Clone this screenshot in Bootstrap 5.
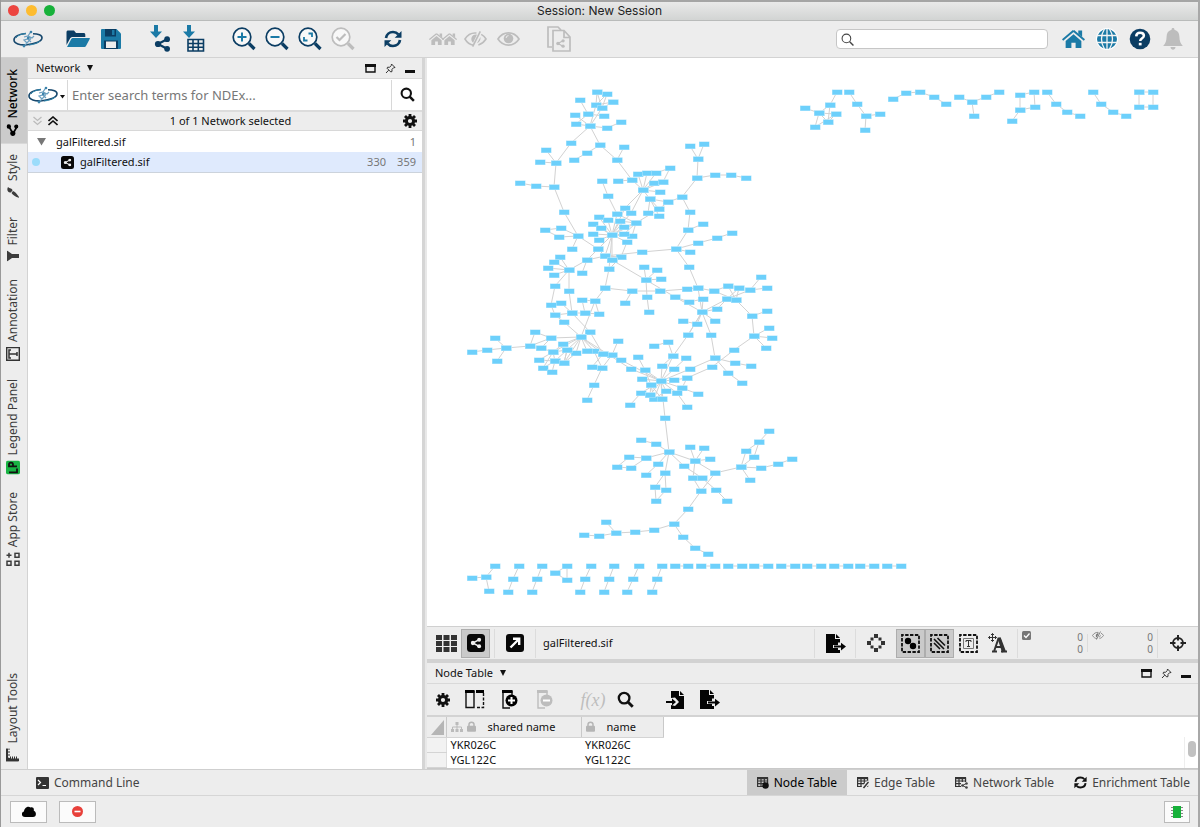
<!DOCTYPE html>
<html lang="en">
<head>
<meta charset="utf-8">
<meta name="viewport" content="width=device-width, initial-scale=1">
<title>Session: New Session</title>
<link href="https://cdn.jsdelivr.net/npm/bootstrap@5.3.0/dist/css/bootstrap.min.css" rel="stylesheet">
<style>
:root{--chrome:#ededed;--line:#d3d3d3;--navy:#0b3d63;--teal:#1b7aa6;--mute:#bdbdbd}
body{font-family:"Noto Sans","Open Sans",sans-serif;font-size:11px;line-height:16px;color:#111;background:var(--chrome)}
svg{display:block;flex:none}
button{font-family:inherit;color:inherit;background:none;border:0;padding:0}
.app-window{border-left:1px solid #999;border-right:2px solid #a8a8a8;min-height:100vh}
.title-bar{height:21px;background:linear-gradient(#e9e9e9,#d2d4d3);border-top:2px solid #a5a5a5;border-bottom:1px solid #b9bbba;font:12px/18px Inter,sans-serif;color:#222}
.title-bar .lights{left:7px;top:3px;gap:7px}
.lights button{width:11px;height:11px;border-radius:50%}
.light-close{background:#ec4540}
.light-min{background:#fdbc2f}
.light-zoom{background:#17b13a}
.tool-bar{height:37px;border-bottom:1px solid var(--line);padding:0 9px 0 10px;gap:17px;color:var(--navy)}
.tool-btn{width:33px;height:34px;display:flex;align-items:center;justify-content:center}
.muted{color:var(--mute)}
.quick-find{width:212px;height:20px;background:#fff;border:1px solid #c6c6c6;border-radius:4px;margin-right:-8px}
.quick-find input,.ndex input{border:0;outline:0;background:none;min-width:0}
.side-strip{width:27px;border-right:1px solid var(--line)}
.side-tab{writing-mode:vertical-rl;transform:rotate(180deg);font-size:12px;line-height:20px;color:#3c3c3c;display:flex;align-items:center;gap:5px;padding:8px 2px 10px 4px;width:26px}
.side-tab.on{background:#cbcbcb;color:#000;font-weight:500;padding-bottom:11px}
.side-tab svg{transform:rotate(180deg)}
.side-tab svg.turn{transform:rotate(90deg)}
.net-panel{width:394px}
.panel-head{height:21px;border-bottom:1px solid #d9d9d9;padding:0 7px 0 8px;background:var(--chrome)}
.head-menu{display:flex;align-items:center;gap:7px}
.ndex{height:33px;border-bottom:2px solid #dcdcdc;font-size:13px}
.ndex input{color:#666;border-left:1px solid #d8d8d8;border-right:1px solid #d8d8d8;padding:0 4px;height:30px}
.ndex input::placeholder{color:#777;opacity:1}
.count-bar{height:19px;border-bottom:1px solid #d8d8d8;background:var(--chrome);padding:0 5px;gap:6px}
.tree-row{height:21px;padding:0 6px 0 4px}
.tree-row .num{color:#777;width:30px;text-align:right}
.tree-row.on{background:#dfeafd;border-bottom:1px solid #ccd3dc}
.split-v{width:5px;background:#d5d5d5;border-right:2px solid #e8e8e8}
.split-h{height:4px;background:#d2d2d2}
.view-bar{height:33px;border-top:1px solid #d0d0d0}
.view-bar .tile{width:29px;height:29px;display:flex;align-items:center;justify-content:center}
.view-bar .wide{width:40px}
.tile.on{background:#cacaca;border:1px solid #adadad}
.rule{width:1px;height:29px;background:#dcdcdc}
.rule.short{height:18px}
.counts{color:#777;font-size:10px;line-height:12px;width:69px;padding:0 4px}
.table-tools{height:33px;border-bottom:2px solid #d3d3d3}
.table-tools button{width:32px;height:30px;display:flex;align-items:center;justify-content:center}
.table-tools .gap-before{margin-left:16px}
.fx{font:italic 18px/20px "Liberation Serif",serif}
.grid-wrap{height:52px;border-bottom:1px solid #c9c9c9;overflow:hidden}
.data-grid{border-collapse:collapse;table-layout:fixed;width:236px}
.data-grid th{height:20px;font-weight:400;background:var(--chrome);border-right:1px solid #c9c9c9;border-bottom:1px solid #d4d4d4;padding:0 4px 0 7px}
.data-grid th span{margin-left:12px}
.data-grid td{height:15px;line-height:14px;padding:0 5px 1px 4px}
.data-grid tbody th{height:15px;background:#f2f2f2;border-right-color:#ddd}
.scroll-lane{width:14px;margin-top:20px;border-left:1px solid #eee}
.scroll-lane div{width:8px;height:16px;border-radius:4px;background:#c1c1c1}
.dock{height:27px;border-top:1px solid #cfcfcf;border-bottom:1px solid #d6d6d6;font-size:12px;color:#444}
.dock button{display:flex;align-items:center;gap:5px;padding:0 10px;height:25px}
.dock button:last-child{padding-right:8px}
.dock .on{background:#cbcbcb;color:#000}
.status{height:31px;padding:0 8px 0 9px;gap:12px}
.status button{height:22px;width:37px;background:#fbfbfb;border:1px solid #bbb;display:flex;align-items:center;justify-content:center}
.status .mem{width:26px}
</style>
</head>
<body>
<svg width="0" height="0" class="position-absolute" aria-hidden="true">
<defs>
<symbol id="i-logo" viewBox="0 0 30 18"><g fill="none"><path d="M13 3.500C6 4 1 6.500 1 10c0 3.500 6 5.500 13 4.700 7-.7 14.500-3 15-6.700.2-2.700-4-4.300-9-4.300" stroke="#17486d" stroke-width="1.600"/><path d="M3 8c2-3 6-4.300 10-4.500M27 11c-2 2-6 3.500-11 4" stroke="#2f86ad" stroke-width="1"/><path d="M18 1.500 15 6l2.500 3L14 13l-3 3M11 7l4-1 4 2 2-2M14 13l-3-3 4-1 3 3" stroke="#6b9fc0" stroke-width="1.200"/></g><g fill="#3b83ab"><circle cx="18" cy="2" r="1.300"/><circle cx="11" cy="16" r="1.400"/><circle cx="15" cy="8" r="1.200"/></g></symbol>
<symbol id="i-folder" viewBox="0 0 24 20"><path d="M.5 16V3.500C.5 2 1 1.500 2.500 1.500H8l2 2.500h7.500c1.200 0 1.800.5 1.800 1.700V8H7C5.500 8 4.500 8.500 3.800 10z" fill="#0b3d63"/><path d="M1 18 5 10.500c.5-1 1-1.500 2.300-1.500H23c.9 0 1 .5.7 1l-3.700 7c-.5.8-1 1-2 1z" fill="#1b7aa6"/></symbol>
<symbol id="i-save" viewBox="0 0 22 22"><path d="M2 1h14.500L21 5.500V20a1 1 0 0 1-1 1H2a1 1 0 0 1-1-1V2a1 1 0 0 1 1-1z" fill="#1b7aa6"/><path d="M5 1h11v7.500H5zM4 12.500h14V21H4z" fill="#0b3d63"/><path d="M6 13.500h10V20H6z" fill="#ededed"/><path d="M12 2h2.500v5H12z" fill="#1b7aa6"/></symbol>
<symbol id="i-share" viewBox="0 0 16 16"><path d="M12.500 3.200 3.500 8l9 4.800" fill="none" stroke="currentColor" stroke-width="2.200"/><circle cx="3.500" cy="8" r="3.100" fill="currentColor"/><circle cx="12.600" cy="3.200" r="2.900" fill="currentColor"/><circle cx="12.600" cy="12.800" r="2.900" fill="currentColor"/></symbol>
<symbol id="i-down" viewBox="0 0 12 13"><path d="M4 0h4v6.500h4L6 13 0 6.500h4z" fill="#1b7aa6"/></symbol>
<symbol id="i-imp-net" viewBox="0 0 22 28"><use href="#i-down" x="0" y="0" width="12" height="13"/><use href="#i-share" x="4" y="11" width="17" height="16"/></symbol>
<symbol id="i-imp-tab" viewBox="0 0 22 28"><use href="#i-down" x="0" y="0" width="12" height="13"/><path d="M5 14.500h15.500v11.500H5zM10 15v11M15.300 15v11M5 18.500h15.500M5 22.200h15.500" fill="none" stroke="#0b3d63" stroke-width="1.600"/></symbol>
<symbol id="i-lens" viewBox="0 0 24 24"><circle cx="10" cy="10" r="8.800" fill="#f8f8f8" stroke="currentColor" stroke-width="1.700"/><path d="m17 16.500 5.500 5.500" stroke="currentColor" stroke-width="3.200"/></symbol>
<symbol id="i-refresh" viewBox="0 0 18 18"><path d="M2 8C2.500 4.500 5.300 2 9 2c2.300 0 4 .8 5.300 2.400M16 10c-.5 3.500-3.300 6-7 6-2.300 0-4-.8-5.300-2.400" fill="none" stroke="currentColor" stroke-width="2.700"/><path d="M17.500 1v6.800h-6.800zM.5 17v-6.800h6.800z" fill="currentColor"/></symbol>
<symbol id="i-home" viewBox="0 0 24 20"><path d="M12 1.500.6 11M12 1.500 23.400 11" fill="none" stroke="currentColor" stroke-width="2"/><path d="M17 1h4v7l-4-3.500zM12 5l8.200 7v7.500h-6V14H9.800v5.500h-6V12z" fill="currentColor"/></symbol>
<symbol id="i-eye" viewBox="0 0 24 16"><path d="M1 8c5.500-8.500 16.500-8.500 22 0-5.500 8.500-16.500 8.500-22 0z" fill="none" stroke="currentColor" stroke-width="1.700"/><circle cx="12" cy="7.500" r="5" fill="currentColor"/><path d="M9.500 7A2.500 2.500 0 0 1 12 4.500" fill="none" stroke="#ededed"/></symbol>
<symbol id="i-eyeoff" viewBox="0 0 24 18"><path d="M10 15.500C6 14.800 3 12.500 1 9c2.800-4.500 7-6.800 12-6.200M18 4.200c2 1.100 3.700 2.800 5 4.800-2 3-4.700 5.200-8 6.200" fill="none" stroke="currentColor" stroke-width="1.600"/><path d="M17 1 9 17" stroke="currentColor" stroke-width="1.700"/><path d="M13.500 4.500 9.500 13C5.500 9.500 8.500 3.500 13.500 4.500zM17.200 7c.5 2.800-.9 5.500-3.700 6.500z" fill="currentColor"/></symbol>
<symbol id="i-docs" viewBox="0 0 24 26"><path d="M5 21H1V1h10l3 3M14 4.500H6V25h17V11l-6-6.500h-3M17 5v6.500h6" fill="none" stroke="currentColor" stroke-width="1.700"/><use href="#i-share" x="9" y="13" width="9" height="9"/></symbol>
<symbol id="i-globe" viewBox="0 0 22 22"><circle cx="11" cy="11" r="11" fill="#fff"/><circle cx="11" cy="11" r="10" fill="#1b7aa6"/><path d="M11 1v20M1 7.500h20M1 14.500h20M8.500 1C4.500 7 4.500 15 8.500 21M13.500 1c4 6 4 14 0 20" fill="none" stroke="#f4f4f4" stroke-width="1.300"/></symbol>
<symbol id="i-help" viewBox="0 0 22 22"><circle cx="11" cy="11" r="10.300" fill="#0b3d63"/><path d="M7.200 8.300c.2-2.500 1.700-3.500 3.900-3.500 2.300 0 3.800 1.200 3.800 3 0 2.500-3.700 2.500-3.700 5.200" fill="none" stroke="#fff" stroke-width="2.500"/><path d="M9.800 14.800h2.800v2.600H9.800z" fill="#fff"/></symbol>
<symbol id="i-bell" viewBox="0 0 20 22"><path d="M10 0c1 0 1.500.7 1.400 1.700 3.200.8 4.900 3.200 5 6.800.1 4.500 1 6.700 3.400 9.500H.2c2.400-2.800 3.300-5 3.400-9.500.1-3.600 1.800-6 5-6.800C8.500.7 9 0 10 0zM7.500 19h5c-.2 3.500-4.800 3.500-5 0z" fill="currentColor"/></symbol>
<symbol id="i-find" viewBox="0 0 16 16"><circle cx="6.700" cy="6.700" r="5" fill="none" stroke="currentColor" stroke-width="2.200"/><path d="m10.300 10.300 4.500 4.500" stroke="currentColor" stroke-width="2.700"/></symbol>
<symbol id="i-thin" viewBox="0 0 12 12"><circle cx="5" cy="5" r="4" fill="none" stroke="#444"/><path d="m8 8 3.500 3.500" stroke="#444" stroke-width="1.300"/></symbol>
<symbol id="i-gear" viewBox="0 0 14 14"><circle cx="7" cy="7" r="3.600" fill="none" stroke="currentColor" stroke-width="3"/><path d="M7 0v3M7 11v3M0 7h3M11 7h3M2 2l2.200 2.200M9.800 9.800 12 12M12 2 9.800 4.200M4.200 9.800 2 12" stroke="currentColor" stroke-width="2.800"/></symbol>
<symbol id="i-caret" viewBox="0 0 6 6"><path d="M0 0h6L3 6z" fill="#111"/></symbol>
<symbol id="i-max" viewBox="0 0 11 9"><path d="M1 1h9v7H1z" fill="none" stroke="#111" stroke-width="1.400"/><path d="M0 0h11v3H0z" fill="#111"/></symbol>
<symbol id="i-pin" viewBox="0 0 11 11"><path d="m6.500 1 3.500 3.500-1.500.3-1.500 1.500V8.500L5.800 9 2 5.200l.6-1 2 .1L6.200 2.600zM3.700 7.200 1 10" fill="none" stroke="#333"/></symbol>
<symbol id="i-min" viewBox="0 0 10 11"><path d="M0 7h10v3H0z" fill="#111"/></symbol>
<symbol id="i-sharebox" viewBox="0 0 18 18"><rect width="18" height="18" rx="3.500" fill="#080808"/><use href="#i-share" x="3.500" y="3.500" width="11" height="11" color="#eee"/></symbol>
<symbol id="i-net3" viewBox="0 0 13 12"><path d="m9.500 2.500-7 4 7 4" stroke="currentColor" stroke-width="1.800" fill="none"/><circle cx="9.600" cy="2.300" r="2.200" fill="currentColor"/><circle cx="2.700" cy="6.300" r="2.600" fill="currentColor"/><circle cx="9.600" cy="9.800" r="2.100" fill="currentColor"/></symbol>
<symbol id="i-export" viewBox="0 0 21 19"><path d="M1 0h9v5h5v3.500h-2V11H8v3h5v2h2v3H1zM11 0l4 4h-4z" fill="#050505"/><path d="M9 11.600h7V8.700l5 3.900-5 3.900v-2.900H9z" fill="#050505"/></symbol>
<symbol id="i-import" viewBox="0 0 18 18"><path d="M5 0h8v5h5v13H5v-4l4 1 4-4-4-4.500L5 7zM14 0l4 4h-4z" fill="#050505"/><path d="M0 10h6V7.500L10 11l-4 3.500V12H0z" fill="#050505"/></symbol>
<symbol id="i-lock" viewBox="0 0 9 11"><path d="M2 5V3.500C2 .5 7 .5 7 3.500V5" fill="none" stroke="#b5b5b5" stroke-width="1.500"/><rect y="4.700" width="9" height="6" rx="1" fill="#b5b5b5"/></symbol>
<symbol id="i-frame" viewBox="0 0 19 19"><path d="M1 1h17v17H1z" fill="none" stroke="#111" stroke-width="1.800" stroke-dasharray="3.400 1.460" stroke-dashoffset="1.700"/></symbol>
<symbol id="i-sheet" viewBox="0 0 13 12"><path d="M.6 1h10v8.500H.6zM.6 4h10M.6 6.700h10M4 1v8.500M7.300 1v8.500" fill="none" stroke="#333" stroke-width="1.200"/><path d="M0 0h11v2.200H0z" fill="#333"/></symbol>
<marker id="node" viewBox="-6 -4 12 8" refX="0" refY="0" markerWidth="12" markerHeight="8" markerUnits="userSpaceOnUse"><rect x="-5" y="-2.500" width="10.500" height="5.500" fill="#b4e6fc"/><rect x="-4.500" y="-2" width="9.500" height="4.500" fill="#6dd0fb"/></marker>
</defs>
</svg>

<div class="app-window d-flex flex-column">
  <header class="title-bar position-relative text-center">
    <div class="lights position-absolute d-flex">
      <button class="light-close" aria-label="Close"></button><button class="light-min" aria-label="Minimize"></button><button class="light-zoom" aria-label="Zoom"></button>
    </div>
    Session: New Session
  </header>

  <div class="tool-bar d-flex align-items-center" role="toolbar">
    <button class="tool-btn" aria-label="Cytoscape"><svg width="30" height="18"><use href="#i-logo"/></svg></button>
    <div class="d-flex">
      <button class="tool-btn" aria-label="Open"><svg width="24" height="20"><use href="#i-folder"/></svg></button>
      <button class="tool-btn" aria-label="Save"><svg width="22" height="22"><use href="#i-save"/></svg></button>
    </div>
    <div class="d-flex">
      <button class="tool-btn" aria-label="Import network"><svg width="22" height="28"><use href="#i-imp-net"/></svg></button>
      <button class="tool-btn" aria-label="Import table"><svg width="22" height="28"><use href="#i-imp-tab"/></svg></button>
    </div>
    <div class="d-flex">
      <button class="tool-btn" aria-label="Zoom in"><svg width="24" height="24"><use href="#i-lens"/><path d="M5.500 10h9M10 5.500v9" stroke="#1b7aa6" stroke-width="2"/></svg></button>
      <button class="tool-btn" aria-label="Zoom out"><svg width="24" height="24"><use href="#i-lens"/><path d="M5.500 10h9" stroke="#1b7aa6" stroke-width="2"/></svg></button>
      <button class="tool-btn" aria-label="Fit content"><svg width="24" height="24"><use href="#i-lens"/><path d="M10.500 6.500H14V10M6 10v3.500h3.500" fill="none" stroke="#1b7aa6" stroke-width="1.800"/></svg></button>
      <button class="tool-btn muted" aria-label="Fit selected" disabled><svg width="24" height="24"><use href="#i-lens"/><path d="m5.500 10 3 3 6-6" fill="none" stroke="#bdbdbd" stroke-width="2.200"/></svg></button>
    </div>
    <button class="tool-btn" aria-label="Refresh"><svg width="18" height="18"><use href="#i-refresh"/></svg></button>
    <div class="d-flex muted">
      <button class="tool-btn" aria-label="First neighbors" disabled><svg width="28" height="14"><use href="#i-home" width="15" height="14"/><use href="#i-home" x="13" width="15" height="14"/></svg></button>
      <button class="tool-btn" aria-label="Hide" disabled><svg width="23" height="18"><use href="#i-eyeoff"/></svg></button>
      <button class="tool-btn" aria-label="Show" disabled><svg width="23" height="16"><use href="#i-eye"/></svg></button>
    </div>
    <button class="tool-btn muted" aria-label="New network from selection" disabled><svg width="24" height="26"><use href="#i-docs"/></svg></button>
    <label class="quick-find d-flex align-items-center ms-auto px-1 gap-1"><svg width="13" height="13"><use href="#i-thin"/></svg><input type="text" class="flex-fill" aria-label="Search"></label>
    <div class="d-flex">
      <button class="tool-btn" aria-label="Home" style="color:var(--teal)"><svg width="23" height="20"><use href="#i-home"/></svg></button>
      <button class="tool-btn" aria-label="Web"><svg width="22" height="22"><use href="#i-globe"/></svg></button>
      <button class="tool-btn" aria-label="Help"><svg width="22" height="22"><use href="#i-help"/></svg></button>
      <button class="tool-btn muted" aria-label="Notifications"><svg width="20" height="22"><use href="#i-bell"/></svg></button>
    </div>
  </div>

  <div class="d-flex flex-fill">
    <nav class="side-strip d-flex flex-column" aria-label="Panels">
      <button class="side-tab on"><svg class="turn" width="13" height="12"><use href="#i-net3"/></svg>Network</button>
      <button class="side-tab"><svg width="12" height="13" viewBox="0 0 12 13"><path d="M11.500 0C8 2 5 4.500 4.500 6.500L6.500 8C8.500 6.500 10.500 4 11.500 0zM4 7C1.500 7 2.500 10 .5 11.500 3 13 6.500 12 6 8.700z" fill="#3c3c3c" transform="rotate(90 6 6.500)"/></svg>Style</button>
      <button class="side-tab"><svg width="12" height="11" viewBox="0 0 12 11"><path d="M0 0v11l5-3.500h7v-4H5z" fill="#3c3c3c"/></svg>Filter</button>
      <button class="side-tab"><svg width="14" height="14" viewBox="0 0 14 14"><path d="M.7.7h12.600v12.600H.7z" fill="none" stroke="#333" stroke-width="1.400"/><path d="M5 3H3v8h2M3 7h8M11 5v4" fill="none" stroke="#333" stroke-width="1.500"/></svg>Annotation</button>
      <button class="side-tab"><svg width="14" height="14" viewBox="0 0 14 14"><rect width="14" height="14" rx="2" fill="#19b444"/><path d="M3 12h8V8M11 6H3V4c0-2.500 4-2.500 4 0v2" fill="none" stroke="#111" stroke-width="1.800"/></svg>Legend Panel</button>
      <button class="side-tab"><svg width="14" height="14" viewBox="0 0 14 14"><path d="M1 9h4v4H1zM9 9h4v4H9zM9 1h4v4H9zM3 .5v5M.5 3h5" fill="none" stroke="#3c3c3c" stroke-width="1.500"/></svg>App Store</button>
      <button class="side-tab mt-auto"><svg width="13" height="13" viewBox="0 0 13 13"><path d="M0 0h2v10l2 1V8h1v3h1V8h1v3h1V8h1v3h1V8h1v3h1v2H0z" fill="#333"/><path d="M0 13V0h4v1H2v2h2v1H2v2h2v1H2v2l3 1h8v3z" fill="#333"/></svg>Layout Tools</button>
    </nav>

    <section class="net-panel bg-white flex-shrink-0">
      <div class="panel-head d-flex align-items-center">
        <button class="head-menu">Network<svg width="6" height="6"><use href="#i-caret"/></svg></button>
        <div class="d-flex ms-auto align-items-center" style="gap:9px">
          <button aria-label="Float"><svg width="11" height="9"><use href="#i-max"/></svg></button><button aria-label="Unpin"><svg width="11" height="11"><use href="#i-pin"/></svg></button><button aria-label="Minimize panel"><svg width="10" height="11"><use href="#i-min"/></svg></button>
        </div>
      </div>
      <div class="ndex d-flex align-items-center">
        <button class="d-flex align-items-center" aria-label="NDEx" style="width:39px"><svg width="30" height="18"><use href="#i-logo"/></svg><svg width="5" height="4" class="mt-1" style="margin-left:2px"><path d="M0 0h5L2.500 3.500z" fill="#111"/></svg></button>
        <input type="text" class="flex-fill" placeholder="Enter search terms for NDEx..." aria-label="Search NDEx">
        <button class="d-flex justify-content-center" aria-label="Search" style="width:30px"><svg width="15" height="15"><use href="#i-find"/></svg></button>
      </div>
      <div class="count-bar d-flex align-items-center">
        <button aria-label="Expand all"><svg width="9" height="10"><path d="m.5 1 4 3.500 4-3.500M.5 5l4 3.500 4-3.500" fill="none" stroke="#bbb" stroke-width="1.300"/></svg></button>
        <button aria-label="Collapse all"><svg width="10" height="10"><path d="m.5 5 4.500-4 4.500 4M.5 9 5 5l4.500 4" fill="none" stroke="#111" stroke-width="1.600"/></svg></button>
        <span class="flex-fill text-center">1 of 1 Network selected</span>
        <button aria-label="Options"><svg width="14" height="14"><use href="#i-gear"/></svg></button>
      </div>
      <div class="tree-row d-flex align-items-center"><svg width="20" height="8"><path d="M5 0h9l-4.500 7.500z" fill="#777"/></svg><span class="ms-1">galFiltered.sif</span><span class="num ms-auto">1</span></div>
      <div class="tree-row on d-flex align-items-center"><svg width="8" height="8"><circle cx="4" cy="4" r="4" fill="#9bdcfb"/></svg><svg width="13" height="13" style="margin:0 6px 0 21px"><use href="#i-sharebox"/></svg>galFiltered.sif<span class="num ms-auto">330</span><span class="num">359</span></div>
    </section>
    <div class="split-v flex-shrink-0"></div>

    <main class="d-flex flex-column flex-fill" style="min-width:0">
      <div class="bg-white flex-fill d-flex">
        <svg class="w-100 h-100" viewBox="427 58 771 568" role="img" aria-label="galFiltered.sif network">
          <defs><path id="net" d="M597 92L596 105 607 94 602 108 597 92M613 102L596 105 590 126 602 108 613 102M580 100L588 114 604 116M575 115L590 126 576 124 588 114M590 126L607 128 621 122M590 126L571 143 556 163 554 187 564 212 578 236 598 249 605 256 612 235M590 126L600 145 617 160 632 180 643 190M546 150L556 163 540 162M520 183L536 186 554 187M600 145L587 153 574 160M617 160L624 147M618 181L632 180M602 181L608 196 617 214 612 235M617 214L636 223
M643 190L638 174M643 190L647 173M643 190L656 173 670 168 663 182 643 190 654 183 663 182M643 190L660 192M643 190L650 199M643 190L625 208 612 235M643 190L631 213 612 235
M650 199L668 202 682 197M650 199L659 209M650 199L648 213M650 199L659 216M668 202L659 209 636 223
M612 235L599 217M612 235L608 220M612 235L593 224M612 235L601 228M612 235L593 234M612 235L599 240M612 235L620 221 636 223 612 235M612 235L624 227 636 223 632 236 612 235 624 234 636 223M612 235L627 242 621 257 605 256M612 235L598 249M612 235L612 260 621 257 609 269 612 235M605 256L612 260M605 256L642 252 676 249M569 270L587 260 605 256M598 249L587 260 582 273M612 260L646 280
M578 236L561 228 545 230 559 237 578 236 572 249M569 270L560 257M569 270L554 262M569 270L548 268M569 270L554 275M569 270L569 291 572 313M569 270L555 286 551 305 555 315 564 322 581 337M561 303L572 313 555 315M572 313L585 313 582 300 595 301 599 314 585 313M609 269L605 288 595 301 581 337M605 288L632 291 660 291M632 291L625 303
M572 313L590 332 603 354M590 332L581 337 551 338 535 332 530 346 551 338 541 348 530 346 506 348 495 338M506 348L497 361M506 348L487 350 472 352M541 348L553 352 581 337 563 344 553 352 555 361 539 360 553 352 543 368 555 361 552 372M555 361L564 363 567 350 555 361M581 337L567 350 564 363 576 353 581 337M553 352L567 350M581 337L564 363M581 337L587 351M581 337L594 351 602 368 594 385 587 400M581 337L603 354 612 355 618 341M612 355L602 368 592 367 603 354M612 355L621 360 661 381M581 337L631 369 661 381M587 351L603 354
M638 357L645 370 651 385M661 381L642 379M661 381L651 385 650 395 661 381M661 381L641 393 630 405M650 395L654 399 661 381 662 399 651 385 654 399 666 391 661 381M650 395L662 399M661 381L677 393 687 407M661 381L682 388 698 394M661 381L674 380 687 378 682 388M687 378L712 367 734 350 754 336M661 381L690 369 715 358M661 381L674 369 686 358M661 381L662 366 673 356 661 381M673 356L668 342 654 346M673 356L688 335 702 312M661 381L645 370M661 381L665 418 669 452
M646 280L644 267M646 280L657 270M646 280L661 279M646 280L647 297 649 312M646 280L675 297 702 312M660 291L687 289 698 288 714 291 736 300M698 288L702 312M675 297L689 302 703 299 702 312M702 312L727 299 739 288 728 286 736 300M702 312L717 309 727 299M702 312L715 321M702 312L697 324 683 321M702 312L688 335M702 312L711 335 715 358M727 299L750 290 761 277M750 290L767 288M727 299L736 300 752 316 767 311M739 288L736 300M714 291L728 286M752 316L754 336 769 328M754 336L772 338M754 336L766 348M715 358L735 363 751 366M715 358L728 373 742 383
M690 146L698 159 704 144M698 159L697 178 682 197 690 212 688 230 676 249 689 267 698 288M697 178L715 175 731 175 746 178M688 230L703 224M690 252L676 249 698 243 717 238 732 233
M669 452L656 444 641 440M669 452L646 458 629 457 617 467 631 468 646 458M669 452L658 464 646 475M669 452L665 473 655 487 656 501 666 490 665 473M669 452L684 466 702 478 716 490 727 501M669 452L695 461 690 447M695 461L704 448M695 461L710 459M695 461L715 473 741 467M695 461L693 478 701 491 715 473M693 478L702 478M701 491L688 509 674 524 683 537 695 548 708 554M674 524L654 530 635 532 616 533 606 522M616 533L599 536 584 535M741 467L746 451 759 442 754 457 741 467 761 468 778 464 792 459M759 442L769 431M741 467L750 480
M495 566L486 577 472 578M486 577L489 591M519 566L513 579 508 592M542 566L537 579 532 592M555 573L567 566 567 580 555 573M591 566L585 579 580 592M614 566L609 579 604 592M639 566L633 579 627 592M662 566L657 579 652 592M675 566H688M701 566H715M728 566H742M754 566H768M781 566H795M807 566H821M834 566H848M860 566H874M887 566H901
M805 108L819 113 830 105 837 92M819 113L836 114 828 122 830 105M836 114L815 127 819 113 828 122M849 92L857 104 866 116 880 114M866 116L865 130M893 99L906 93 920 92 934 97 946 104M959 97L972 102 986 97 999 92M972 102L974 116M1012 121L1020 110 1020 95 1034 92 1035 107 1020 110M1047 92L1056 104 1067 112 1080 116M1093 92L1101 104 1113 112 1126 116M1139 92L1153 92 1153 107 1139 107 1139 92"/></defs>
          <use href="#net" fill="none" stroke="#d2d2d2" stroke-width="1"/>
          <g fill="none" style="marker:url(#node)"><use href="#net"/></g>
        </svg>
      </div>

      <div class="view-bar d-flex align-items-center" role="toolbar">
        <button class="tile" aria-label="Grid" style="margin-left:5px"><svg width="21" height="17"><path d="M0 0h6v5H0zm7.500 0h6v5h-6zM15 0h6v5h-6zM0 6h6v5H0zm7.500 0h6v5h-6zM15 6h6v5h-6zM0 12h6v5H0zm7.500 0h6v5h-6zM15 12h6v5h-6z" fill="#333"/></svg></button>
        <button class="tile on" aria-label="Network view"><svg width="18" height="18"><use href="#i-sharebox"/></svg></button>
        <span class="rule ms-1"></span>
        <button class="tile wide" aria-label="Detach"><svg width="18" height="18" viewBox="0 0 18 18"><rect width="18" height="18" rx="3" fill="#080808"/><path d="M4.500 13.500 12 6M7 4.800h6.200V11" fill="none" stroke="#fff" stroke-width="2.400"/></svg></button>
        <span class="rule"></span>
        <span class="flex-fill" style="padding-left:7px">galFiltered.sif</span>
        <span class="rule"></span>
        <button class="tile wide" aria-label="Export"><svg width="21" height="19"><use href="#i-export"/></svg></button>
        <span class="rule"></span>
        <button class="tile wide" aria-label="Show all"><svg width="18" height="18"><path d="M7 0h4v4H7zM7 14h4v4H7zM0 7h4v4H0zM14 7h4v4h-4zM3.500 3.500h3v3h-3zM11.500 3.500h3v3h-3zM3.500 11.500h3v3h-3zM11.500 11.500h3v3h-3z" fill="#333"/></svg></button>
        <button class="tile on" aria-label="Select nodes"><svg width="19" height="19"><use href="#i-frame"/><circle cx="7" cy="7" r="3.200"/><circle cx="12" cy="12" r="3.200"/></svg></button>
        <button class="tile on" aria-label="Select edges"><svg width="19" height="19"><use href="#i-frame"/><path d="m4 5 10 10M7.500 4 15 11.500M4 9l6 6" stroke="#111" stroke-width="1.600"/></svg></button>
        <button class="tile" aria-label="Select annotations"><svg width="19" height="19"><use href="#i-frame"/><path d="M4.500 4.500h10v10h-10z" fill="none" stroke="#777"/><path d="M7 8V6.500h5V8M9.500 6.500v6M8 12.500h3" fill="none" stroke="#333"/></svg></button>
        <button class="tile" aria-label="Move labels"><svg width="19" height="20" viewBox="0 0 19 20"><path d="M4.500.5v8M.5 4.500h8M3 2l1.500-1.500L6 2M3 7l1.500 1.500L6 7M2 3 .5 4.500 2 6M7 3l1.500 1.500L7 6" fill="none" stroke="#333"/><path d="M4 18.500h5M13 18.500h6M6 18.500l4.500-13h1.500l5 13M7.500 14h7" fill="none" stroke="#333" stroke-width="2"/><path d="m11 5 4.500 14" stroke="#333" stroke-width="3"/></svg></button>
        <span class="rule" style="margin-left:5px"></span>
        <div class="counts d-flex justify-content-between"><svg width="9" height="9"><rect width="9" height="9" rx="1.500" fill="#777"/><path d="m2 4.500 2 2 3.500-4" fill="none" stroke="#fff" stroke-width="1.300"/></svg><span class="text-end">0<br>0</span></div>
        <span class="rule short"></span>
        <div class="counts d-flex justify-content-between"><svg width="12" height="9"><use href="#i-eyeoff"/></svg><span class="text-end">0<br>0</span></div>
        <span class="rule"></span>
        <button class="tile wide" aria-label="Center"><svg width="16" height="16"><circle cx="8" cy="8" r="5" fill="none" stroke="#222" stroke-width="1.800"/><path d="M8 0v5.500M8 10.500V16M0 8h5.500M10.500 8H16" stroke="#222" stroke-width="2"/></svg></button>
      </div>
      <div class="split-h"></div>

      <div class="panel-head d-flex align-items-center">
        <button class="head-menu">Node Table<svg width="6" height="6"><use href="#i-caret"/></svg></button>
        <div class="d-flex ms-auto align-items-center" style="gap:9px">
          <button aria-label="Float"><svg width="11" height="9"><use href="#i-max"/></svg></button><button aria-label="Unpin"><svg width="11" height="11"><use href="#i-pin"/></svg></button><button aria-label="Minimize panel"><svg width="10" height="11"><use href="#i-min"/></svg></button>
        </div>
      </div>
      <div class="table-tools d-flex align-items-center" role="toolbar">
        <button aria-label="Table options"><svg width="14" height="14"><use href="#i-gear"/></svg></button>
        <button aria-label="Show columns"><svg width="20" height="19"><path d="M1 1.500h8v16H1z" fill="none" stroke="#111" stroke-width="1.400"/><path d="M0 0h9.500v3H0zM11 0h8v3h-8z"/><path d="M12 17.500h6.500V2" fill="none" stroke="#111" stroke-width="1.400" stroke-dasharray="3 1.500"/></svg></button>
        <button aria-label="Add column" style="width:38px"><svg width="16" height="19"><path d="M8 18H1V1.500h9V5" fill="none" stroke="#111" stroke-width="1.400"/><path d="M0 0h10.500v3H0z"/><circle cx="9.500" cy="10.500" r="6"/><path d="M6 10.500h7M9.500 7v7" stroke="#fff" stroke-width="2"/></svg></button>
        <button aria-label="Delete column" disabled><svg width="16" height="19" fill="#bdbdbd"><path d="M8 18H1V1.500h9V5" fill="none" stroke="#bdbdbd" stroke-width="1.400"/><path d="M0 0h10.500v3H0z"/><circle cx="9.500" cy="10.500" r="6"/><path d="M6 10.500h7" stroke="#fff" stroke-width="2"/></svg></button>
        <button class="fx muted gap-before" disabled>f(x)</button>
        <button aria-label="Find"><svg width="17" height="17"><use href="#i-find"/></svg></button>
        <button class="gap-before" aria-label="Import table" style="width:36px"><svg width="18" height="18"><use href="#i-import"/></svg></button>
        <button aria-label="Export table"><svg width="21" height="19"><use href="#i-export"/></svg></button>
      </div>
      <div class="grid-wrap bg-white d-flex">
        <table class="data-grid">
          <colgroup><col style="width:19px"><col style="width:135px"><col style="width:82px"></colgroup>
          <thead><tr>
            <th class="p-0" aria-label="Select all"><svg width="16" height="18" class="ms-auto"><path d="M14 2v15H1z" fill="#b5b5b5"/></svg></th>
            <th class="ps-1"><div class="d-flex align-items-center"><svg width="12" height="10"><path d="M4.500 0h3v3h-3zM0 7h3v3H0zM4.500 7h3v3h-3zM9 7h3v3H9z" fill="#bbb"/><path d="M6 3v4M1.500 7V5h9v2" fill="none" stroke="#bbb"/></svg><svg width="9" height="11" class="ms-1"><use href="#i-lock"/></svg><span>shared name</span></div></th>
            <th class="ps-1"><div class="d-flex align-items-center"><svg width="9" height="11"><use href="#i-lock"/></svg><span>name</span></div></th>
          </tr></thead>
          <tbody><tr><th></th><td>YKR026C</td><td>YKR026C</td></tr><tr><th></th><td>YGL122C</td><td>YGL122C</td></tr></tbody>
        </table>
        <div class="scroll-lane ms-auto pt-1 d-flex justify-content-center"><div></div></div>
      </div>
    </main>
  </div>

  <nav class="dock d-flex align-items-center" aria-label="Tables">
    <button style="margin-left:25px"><svg width="13" height="12"><rect width="13" height="12" rx="1" fill="#333"/><path d="m2 3 2.500 2.500L2 8M6.500 8.500H10" fill="none" stroke="#fff" stroke-width="1.200"/></svg>Command Line</button>
    <button class="on ms-auto"><svg width="12" height="12"><use href="#i-sheet" width="13" height="12"/><circle cx="8.500" cy="8.500" r="3.200" fill="#111"/></svg>Node Table</button>
    <button><svg width="12" height="12"><use href="#i-sheet" width="13" height="12"/><path d="m6 11 6-6" stroke="#ededed" stroke-width="4"/><path d="m6.500 11 5-6" stroke="#333" stroke-width="1.500"/></svg>Edge Table</button>
    <button><svg width="13" height="12"><use href="#i-sheet" width="13" height="12"/><path d="M6 5h7v7H6z" fill="#ededed"/><use href="#i-share" x="6" y="5" width="7" height="7"/></svg>Network Table</button>
    <button><svg width="13" height="13" color="#111"><use href="#i-refresh"/></svg>Enrichment Table</button>
  </nav>
  <footer class="status d-flex align-items-center">
    <button aria-label="Cloud status"><svg width="14" height="11"><path d="M3 11c-4 0-4-5-1-5.500C2 2 6-.8 8.500 1.500c2-.8 4 .7 3.200 3C15 6 14.500 11 11 11z" fill="#050505"/></svg></button>
    <button aria-label="Tasks"><svg width="11" height="11"><circle cx="5.500" cy="5.500" r="5.500" fill="#e8403a"/><path d="M2.500 5.500h6" stroke="#fff" stroke-width="1.600"/></svg></button>
    <button aria-label="Memory" class="mem ms-auto"><svg width="12" height="12"><path d="M0 1.500h12M0 4.500h12M0 7.500h12M0 10.500h12" stroke="#888"/><rect x="2" width="8" height="12" fill="#17b13a"/></svg></button>
  </footer>
</div>
<script src="https://cdn.jsdelivr.net/npm/bootstrap@5.3.0/dist/js/bootstrap.bundle.min.js"></script>
</body>
</html>
